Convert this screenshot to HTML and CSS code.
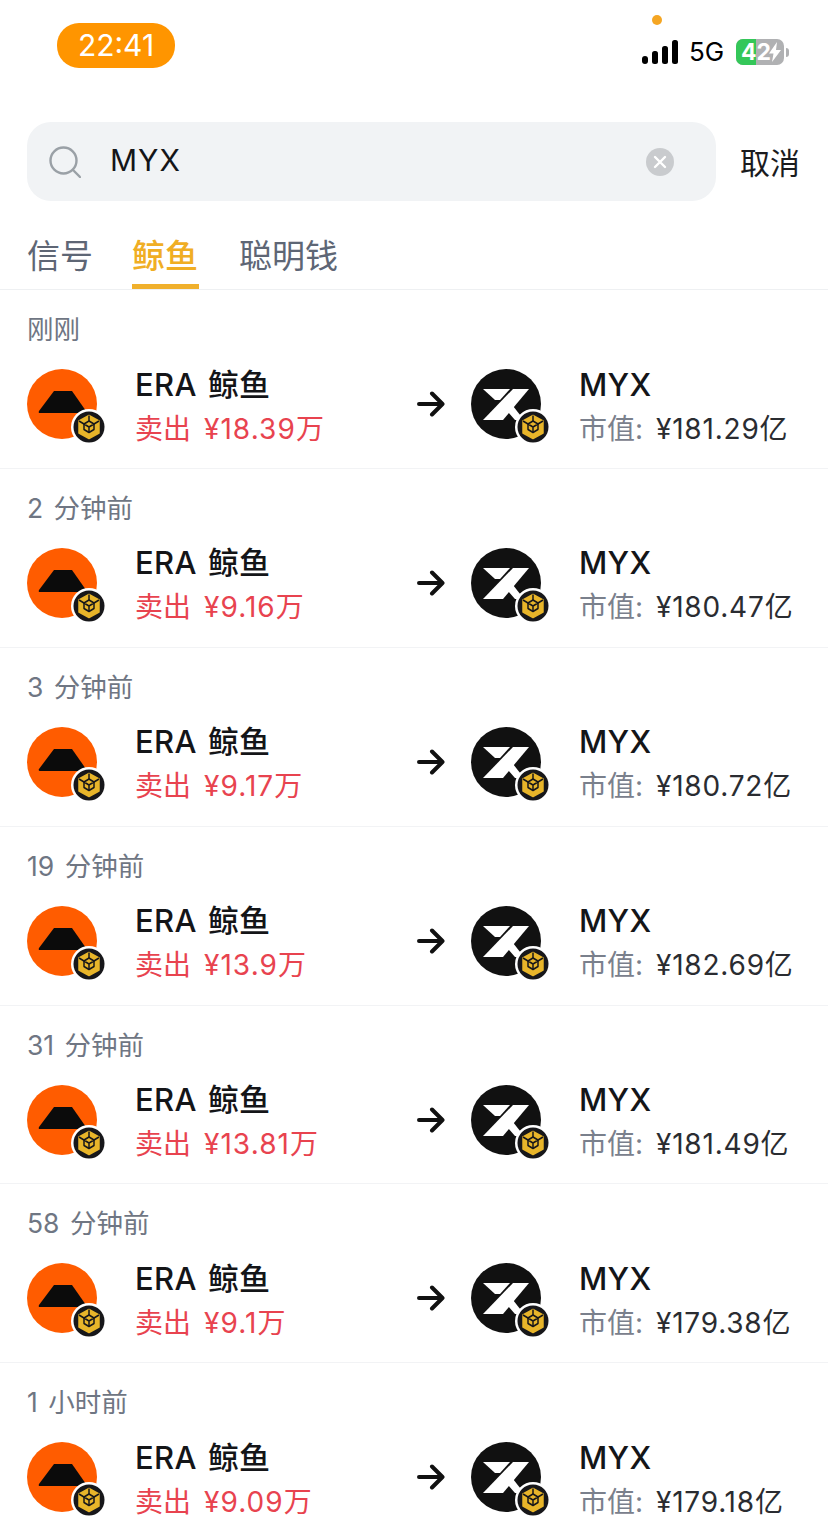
FILE: index.html
```html
<!DOCTYPE html>
<html lang="zh">
<head>
<meta charset="utf-8">
<title>MYX</title>
<link rel="stylesheet" href="styles.css">
</head>
<body>
<svg class="defs" width="0" height="0" aria-hidden="true">
  <symbol id="era" viewBox="0 0 70 70">
    <circle cx="35" cy="35" r="35" fill="#ff5c00"/>
    <path d="M27 22h18l14 20q1 2-1 2H13q-2 0-1-2z" fill="#0b0b0b"/>
  </symbol>
  <symbol id="myx" viewBox="0 0 70 70">
    <circle cx="35" cy="35" r="35" fill="#111"/>
    <path d="M12 20H39L29 31H24z" fill="#fff"/>
    <path d="M42 20H58L32 51H12z" fill="#fff"/>
    <path d="M37 43l5-6 11 14H44z" fill="#fff"/>
  </symbol>
  <symbol id="bnb" viewBox="0 0 36 36">
    <circle cx="18" cy="18" r="18" fill="#fff"/>
    <circle cx="18" cy="18" r="15.500" fill="#17171a"/>
    <path d="M18 6.500l10 5.500v12l-10 5.500-10-5.500v-12z" fill="#e8b52a" stroke="#e8b52a" stroke-width="1.500" stroke-linejoin="round"/>
    <g fill="none" stroke="#17171a" stroke-width="1.500" stroke-linejoin="round">
      <path d="M8 12l5 3v5.500l5 3 5-3V15l5-3"/>
      <path d="M13 15l5-3 5 3-5 3zM18 18v5.500"/>
      <path d="M18 6.500v5.500"/>
    </g>
  </symbol>
  <symbol id="arrow" viewBox="0 0 28 28">
    <path d="M2 14h23M15 3.500 25.500 14 15 24.500" fill="none" stroke="#111" stroke-width="4" stroke-linecap="round" stroke-linejoin="round"/>
  </symbol>
</svg>

<div class="page">
  <header class="status">
    <div class="clock">22:41</div>
    <div class="status-right">
      <span class="mic-dot"></span>
      <svg class="signal" viewBox="0 0 36 24">
        <rect x="0" y="16" width="6" height="8" rx="3"/>
        <rect x="10" y="11" width="6" height="13" rx="2.500"/>
        <rect x="20" y="6" width="6" height="18" rx="2.500"/>
        <rect x="30" y="0" width="6" height="24" rx="2.500"/>
      </svg>
      <span class="net">5G</span>
      <div class="battery">
        <span class="batt-body">
          <span class="batt-fill"></span>
          <span class="batt-text">42</span>
          <svg class="bolt" viewBox="0 0 12 20"><path d="M8 0 0 11.500h4.500L3 20l9-12H7z" fill="#fff"/></svg>
        </span>
        <span class="batt-tip"></span>
      </div>
    </div>
  </header>

  <div class="search-row">
    <div class="search">
      <svg class="search-icon" viewBox="0 0 32 32">
        <circle cx="14.500" cy="14.500" r="13" fill="none" stroke="#9aa0a6" stroke-width="2.400"/>
        <path d="M24.500 24.500 31 31" stroke="#9aa0a6" stroke-width="2.400" stroke-linecap="round"/>
      </svg>
      <span class="query">MYX</span>
      <svg class="clear" viewBox="0 0 28 28">
        <circle cx="14" cy="14" r="14" fill="#c9cbce"/>
        <path d="M9 9l10 10M19 9 9 19" stroke="#fff" stroke-width="2.400" stroke-linecap="round"/>
      </svg>
    </div>
    <span class="cancel">取消</span>
  </div>

  <nav class="tabs">
    <span class="tab">信号</span>
    <span class="tab active">鲸鱼</span>
    <span class="tab">聪明钱</span>
  </nav>

  <main class="list">
    <article class="row">
      <div class="time">刚刚</div>
      <div class="body">
        <div class="coin"><svg class="logo"><use href="#era"/></svg><svg class="badge"><use href="#bnb"/></svg></div>
        <div class="info left"><div class="name"><span class="lat">ERA</span> 鲸鱼</div><div class="sub sell">卖出 <span class="lat">¥18.39</span>万</div></div>
        <svg class="arrow"><use href="#arrow"/></svg>
        <div class="coin"><svg class="logo"><use href="#myx"/></svg><svg class="badge"><use href="#bnb"/></svg></div>
        <div class="info right"><div class="name"><span class="lat">MYX</span></div><div class="sub cap">市值: <span class="val">¥181.29</span><span class="unit">亿</span></div></div>
      </div>
    </article>
    <article class="row">
      <div class="time">2 分钟前</div>
      <div class="body">
        <div class="coin"><svg class="logo"><use href="#era"/></svg><svg class="badge"><use href="#bnb"/></svg></div>
        <div class="info left"><div class="name"><span class="lat">ERA</span> 鲸鱼</div><div class="sub sell">卖出 <span class="lat">¥9.16</span>万</div></div>
        <svg class="arrow"><use href="#arrow"/></svg>
        <div class="coin"><svg class="logo"><use href="#myx"/></svg><svg class="badge"><use href="#bnb"/></svg></div>
        <div class="info right"><div class="name"><span class="lat">MYX</span></div><div class="sub cap">市值: <span class="val">¥180.47</span><span class="unit">亿</span></div></div>
      </div>
    </article>
    <article class="row">
      <div class="time">3 分钟前</div>
      <div class="body">
        <div class="coin"><svg class="logo"><use href="#era"/></svg><svg class="badge"><use href="#bnb"/></svg></div>
        <div class="info left"><div class="name"><span class="lat">ERA</span> 鲸鱼</div><div class="sub sell">卖出 <span class="lat">¥9.17</span>万</div></div>
        <svg class="arrow"><use href="#arrow"/></svg>
        <div class="coin"><svg class="logo"><use href="#myx"/></svg><svg class="badge"><use href="#bnb"/></svg></div>
        <div class="info right"><div class="name"><span class="lat">MYX</span></div><div class="sub cap">市值: <span class="val">¥180.72</span><span class="unit">亿</span></div></div>
      </div>
    </article>
    <article class="row">
      <div class="time">19 分钟前</div>
      <div class="body">
        <div class="coin"><svg class="logo"><use href="#era"/></svg><svg class="badge"><use href="#bnb"/></svg></div>
        <div class="info left"><div class="name"><span class="lat">ERA</span> 鲸鱼</div><div class="sub sell">卖出 <span class="lat">¥13.9</span>万</div></div>
        <svg class="arrow"><use href="#arrow"/></svg>
        <div class="coin"><svg class="logo"><use href="#myx"/></svg><svg class="badge"><use href="#bnb"/></svg></div>
        <div class="info right"><div class="name"><span class="lat">MYX</span></div><div class="sub cap">市值: <span class="val">¥182.69</span><span class="unit">亿</span></div></div>
      </div>
    </article>
    <article class="row">
      <div class="time">31 分钟前</div>
      <div class="body">
        <div class="coin"><svg class="logo"><use href="#era"/></svg><svg class="badge"><use href="#bnb"/></svg></div>
        <div class="info left"><div class="name"><span class="lat">ERA</span> 鲸鱼</div><div class="sub sell">卖出 <span class="lat">¥13.81</span>万</div></div>
        <svg class="arrow"><use href="#arrow"/></svg>
        <div class="coin"><svg class="logo"><use href="#myx"/></svg><svg class="badge"><use href="#bnb"/></svg></div>
        <div class="info right"><div class="name"><span class="lat">MYX</span></div><div class="sub cap">市值: <span class="val">¥181.49</span><span class="unit">亿</span></div></div>
      </div>
    </article>
    <article class="row">
      <div class="time">58 分钟前</div>
      <div class="body">
        <div class="coin"><svg class="logo"><use href="#era"/></svg><svg class="badge"><use href="#bnb"/></svg></div>
        <div class="info left"><div class="name"><span class="lat">ERA</span> 鲸鱼</div><div class="sub sell">卖出 <span class="lat">¥9.1</span>万</div></div>
        <svg class="arrow"><use href="#arrow"/></svg>
        <div class="coin"><svg class="logo"><use href="#myx"/></svg><svg class="badge"><use href="#bnb"/></svg></div>
        <div class="info right"><div class="name"><span class="lat">MYX</span></div><div class="sub cap">市值: <span class="val">¥179.38</span><span class="unit">亿</span></div></div>
      </div>
    </article>
    <article class="row">
      <div class="time">1 小时前</div>
      <div class="body">
        <div class="coin"><svg class="logo"><use href="#era"/></svg><svg class="badge"><use href="#bnb"/></svg></div>
        <div class="info left"><div class="name"><span class="lat">ERA</span> 鲸鱼</div><div class="sub sell">卖出 <span class="lat">¥9.09</span>万</div></div>
        <svg class="arrow"><use href="#arrow"/></svg>
        <div class="coin"><svg class="logo"><use href="#myx"/></svg><svg class="badge"><use href="#bnb"/></svg></div>
        <div class="info right"><div class="name"><span class="lat">MYX</span></div><div class="sub cap">市值: <span class="val">¥179.18</span><span class="unit">亿</span></div></div>
      </div>
    </article>
  </main>
</div>
</body>
</html>
```

FILE: styles.css
```css
* { box-sizing: border-box; }
html, body { margin: 0; padding: 0; background: #fff; }
body {
  font-family: "Inter", "Noto Sans CJK SC", sans-serif;
  color: #141518;
  overflow: hidden;
}
.defs { position: absolute; }
.page { width: 828px; height: 1523px; overflow: hidden; }

.status {
  height: 122px;
  display: flex;
  justify-content: space-between;
  align-items: flex-start;
  padding: 23px 39px 0 57px;
}
.clock {
  width: 118px;
  height: 45px;
  border-radius: 22px;
  background: #ff9500;
  color: #fff;
  font-size: 30px;
  line-height: 45px;
  text-align: center;
}
.status-right {
  position: relative;
  display: flex;
  align-items: center;
  margin-top: 16px;
  height: 26px;
}
.mic-dot {
  position: absolute;
  left: 10px;
  top: -24px;
  width: 10px;
  height: 10px;
  border-radius: 50%;
  background: #f5a623;
}
.signal { width: 36px; height: 24px; fill: #000; }
.net {
  margin-left: 11px;
  width: 47px;
  font-size: 26px;
  line-height: 26px;
  color: #000;
}
.battery { display: flex; align-items: center; }
.batt-body {
  position: relative;
  display: block;
  width: 48px;
  height: 26px;
  border-radius: 7px;
  background: #b0b1b3;
  overflow: hidden;
}
.batt-fill {
  position: absolute;
  left: 0; top: 0; bottom: 0;
  width: 20px;
  background: #34c759;
}
.batt-text {
  position: absolute;
  left: 5px;
  top: 0;
  font-size: 23px;
  font-weight: 700;
  line-height: 26px;
  color: #fff;
}
.bolt { position: absolute; left: 33px; top: 3px; width: 12px; height: 20px; }
.batt-tip {
  width: 3px;
  height: 9px;
  margin-left: 2px;
  border-radius: 0 3px 3px 0;
  background: #b0b1b3;
}

.search-row {
  display: flex;
  align-items: center;
  padding: 0 28px 0 27px;
  gap: 24px;
}
.search {
  flex: none;
  width: 689px;
  height: 79px;
  border-radius: 24px;
  background: #f1f3f5;
  display: flex;
  align-items: center;
  padding: 0 42px 0 22px;
}
.search-icon { width: 32px; height: 32px; flex: none; }
.query {
  margin-left: 29px;
  padding-bottom: 3px;
  flex: 1;
  font-size: 30px;
  letter-spacing: 1px;
  color: #141518;
}
.clear { width: 28px; height: 28px; flex: none; }
.cancel { font-size: 30px; padding-bottom: 2px; color: #1a1b1e; white-space: nowrap; }

.tabs {
  margin-top: 14px;
  height: 75px;
  padding: 0 27px;
  display: flex;
  border-bottom: 1px solid #eef0f2;
}
.tab {
  height: 74px;
  font-size: 33px;
  line-height: 40px;
  padding-top: 21px;
  color: #5e6675;
}
.tab.active {
  width: 67px;
  margin: 0 40px 0 39px;
  color: #f0ae24;
  font-weight: 500;
  border-bottom: 5px solid #f0b02c;
}

.row {
  height: 178.9px;
  padding: 19px 27px 0;
  border-bottom: 1px solid #f2f3f5;
}
.row:last-child { border-bottom: 0; }
.time {
  font-size: 26.5px;
  line-height: 40px;
  word-spacing: 3px;
  color: #6f7683;
}
.body {
  margin-top: 20px;
  display: flex;
  align-items: center;
  height: 70px;
}
.coin { position: relative; flex: none; width: 70px; height: 70px; }
.logo { display: block; width: 70px; height: 70px; }
.badge {
  position: absolute;
  left: 44px;
  top: 40px;
  width: 36px;
  height: 36px;
}
.info {
  flex: none;
  display: flex;
  flex-direction: column;
  gap: 4px;
  margin-top: 5px;
  white-space: nowrap;
}
.info.left { margin-left: 38px; width: 282px; }
.info.right { margin-left: 38px; }
.arrow { flex: none; width: 28px; height: 28px; margin-right: 26px; }
.name {
  font-size: 31px;
  line-height: 40px;
  font-weight: 500;
  word-spacing: 3px;
  color: #141518;
}
.name .lat { letter-spacing: 0.3px; }
.sub { font-size: 28px; line-height: 40px; word-spacing: 5px; }
.sub .lat { letter-spacing: 1.1px; }
.sell { color: #e8434f; }
.cap { color: #7a808c; }
.val { color: #2a2c31; letter-spacing: 0.8px; }
.unit { color: #2a2c31; }
```
